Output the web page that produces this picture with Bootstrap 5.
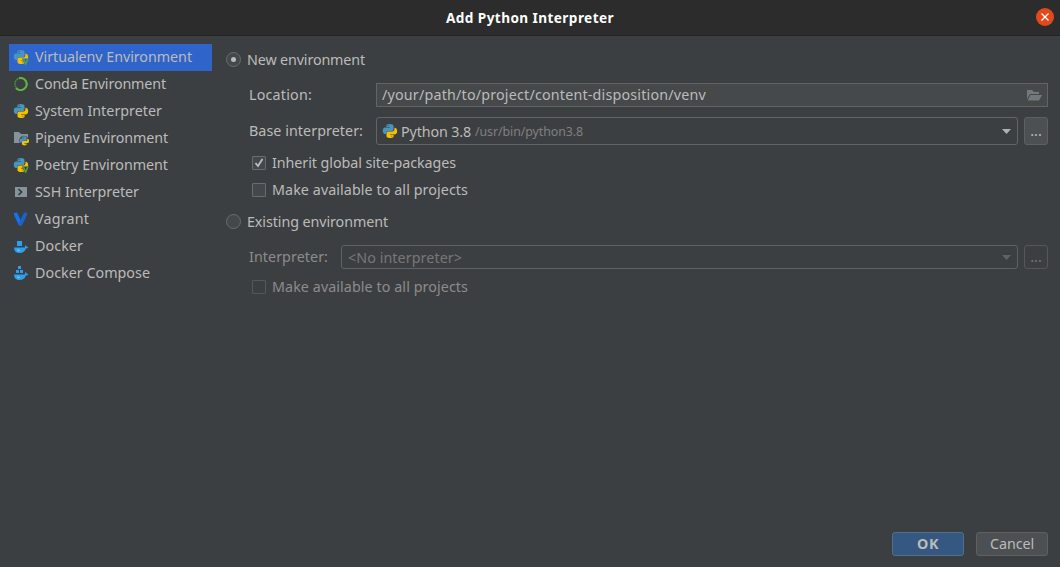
<!DOCTYPE html>
<html lang="en">
<head>
<meta charset="utf-8">
<title>Add Python Interpreter</title>
<link href="https://cdn.jsdelivr.net/npm/bootstrap@5.3.0/dist/css/bootstrap.min.css" rel="stylesheet">
<script src="https://cdn.jsdelivr.net/npm/bootstrap@5.3.0/dist/js/bootstrap.bundle.min.js"></script>
<style>
body{background:#3c3f41;color:#bbb;font:14.3px/20px "Noto Sans","Open Sans",sans-serif;height:567px;overflow:hidden}
svg{display:block;flex:none}
.titlebar{height:36px;background:#2c2c2c;border-bottom:1px solid #232323;color:#fff;font-weight:700;font-size:13.6px}
.close-btn{right:6px;top:8px;width:18px;height:18px}
.sidebar{width:212px;padding:8px 0 0 9px}
.envs{--bs-list-group-bg:transparent;--bs-list-group-color:#bbb;--bs-list-group-border-width:0;--bs-list-group-border-radius:0;--bs-list-group-active-bg:#2f65ca;--bs-list-group-active-color:#bbb}
.envs .list-group-item{height:27px;padding:0 0 1px 4px;gap:6px;margin:0}
.pane{padding:0 12px 0 14px}
.line{height:27px}
.sub{padding-left:23px}
.base-row{margin-top:10px}
.existing{margin-top:5px}
.interp-row{margin-top:10px}
.radio{width:15px;height:15px;border:1px solid #6b6b6b;border-radius:50%;background:#43494a;margin-right:6px}
.radio.on::after{content:"";width:5px;height:5px;border-radius:50%;background:#bbb}
.tick{width:14px;height:14px;border:1px solid #6b6b6b;border-radius:1px;background:#43494a;margin:0 6px 0 3px}
.field{height:24px;border:1px solid #646464;background:#45494a;padding:0 5px}
.combo{height:28px;border:1px solid #646464;border-radius:3px;padding:0 6px 0 5px}
.combo .fit{padding-top:1px}
.combo .me-1{margin-right:3px!important}
.low{height:24px;padding-left:6px}
.dots{width:24px;border:1px solid #5e6060;border-radius:3px;background:#4c5052;margin-left:6px;color:#bbb;padding:0}
.off{color:#8c8c8c}
.off .tick,.off .dots{background:#3c3f41;border-color:#575757}
.off .dots{color:#777}
.off .combo{color:#777;border-color:#606162}
.lbl{width:127px}
.lbl2{width:92px}
.path-hint{font-size:12.4px;color:#808080;margin-left:4px}
.act{width:72px;height:24px;border:1px solid #5e6060;border-radius:3px;background:#4c5052;color:#bbb;font-size:14.3px;line-height:20px;padding:0}
.act.main{background:#365880;border-color:#4c708c;font-weight:700}
footer{padding:0 12px 11px}
.fit{white-space:nowrap;display:inline-block}
</style>
</head>
<body class="d-flex flex-column">
<svg width="0" height="0" class="position-absolute"><defs>
<g id="py"><path fill="#4696c4" d="M5 1.5Q7.500.4 10.600 1.500 11.500 2 11.500 3v3.400Q11.500 8 10 8H6Q4.200 8 4.200 9.800V11H3Q.8 10.700.8 7.700.8 4.700 3 4.500h5V4H4.400V2.500Q4.400 1.800 5 1.500Z"/><path fill="#f2c100" d="M12.400 4.800H13q2.200.4 2.200 3.300 0 3-2.200 3.300H8v.6h3.600v1.500q0 .7-.7 1Q8.300 15.600 5.500 14.500 4.500 14 4.500 13V10q0-1.500 1.500-1.500h4.500q1.900 0 1.900-1.900Z"/><circle cx="6.200" cy="2.700" r=".6" fill="#2e566e"/><circle cx="9.800" cy="13.200" r=".6" fill="#8d7622"/></g>
<g id="whale" fill="#2c9ff0"><path d="M1 8.500h10.800Q11.800 7 12.600 6q1 .7 1.100 1.700 1-.1 1.700.3-.7 1.500-2.500 1.600Q11.600 14 6.700 14 1.200 14 1 8.500Z"/><circle cx="5.500" cy="11" r="1.200" fill="#9bd2f8"/><circle cx="5.800" cy="10.700" r=".6" fill="#2473aa"/></g>
</defs></svg>
<header class="titlebar position-relative d-flex align-items-center justify-content-center flex-shrink-0"><span class="fit" data-w="168">Add Python Interpreter</span>
<svg class="close-btn position-absolute" viewBox="0 0 18 18"><circle cx="9" cy="9" r="9" fill="#e3491b"/><path d="m5.500 5.500 7 7m0-7-7 7" stroke="#fff" stroke-width="1.300"/></svg></header>
<main class="d-flex flex-grow-1">
<nav class="sidebar flex-shrink-0"><div class="list-group envs">
<div class="list-group-item active d-flex align-items-center"><svg width="16" height="16"><use href="#py"/><path d="M9 9.500h7V16h-4z" fill="#2f65ca"/><path d="m10.300 9.500 2.300 5.700L15 9.500" fill="none" stroke="#56a43d" stroke-width="1.500"/></svg><span class="fit" data-w="157">Virtualenv Environment</span></div>
<div class="list-group-item d-flex align-items-center"><svg width="16" height="16"><circle cx="8" cy="8" r="6" fill="none" stroke="#438b36" stroke-width="1.500" stroke-dasharray="2 .5"/><path d="M6 2.300A6 6 0 1 1 3 12" fill="none" stroke="#62b543" stroke-width="2"/></svg><span class="fit" data-w="131">Conda Environment</span></div>
<div class="list-group-item d-flex align-items-center"><svg width="16" height="16"><use href="#py"/></svg><span class="fit" data-w="127">System Interpreter</span></div>
<div class="list-group-item d-flex align-items-center"><svg width="16" height="16"><path fill="#87939a" d="M1 2h5l2 2h7v9H1z"/><circle cx="11" cy="10.600" r="4.800" fill="#3c3f41"/><use href="#py" transform="translate(6 5.500) scale(.66)"/></svg><span class="fit" data-w="133">Pipenv Environment</span></div>
<div class="list-group-item d-flex align-items-center"><svg width="16" height="16"><use href="#py"/><path d="M9 9.500h7V16h-4z" fill="#3c3f41"/><path d="m10.300 9.500 2.300 5.700L15 9.500" fill="none" stroke="#56a43d" stroke-width="1.500"/></svg><span class="fit" data-w="133">Poetry Environment</span></div>
<div class="list-group-item d-flex align-items-center"><svg width="16" height="16"><path fill="#87939a" d="M2 3h12v10H2z"/><path d="m5.500 5 3 3-3 3" fill="none" stroke="#34383a" stroke-width="1.700"/></svg><span class="fit" data-w="104">SSH Interpreter</span></div>
<div class="list-group-item d-flex align-items-center"><svg width="16" height="16"><path d="m1 2 3-.5L8 10v4.500H6L1 4z" fill="#1672ee"/><path d="m11 1.500 3 .5v2L9 14.500H6.500V11z" fill="#1563d2"/></svg><span class="fit" data-w="54">Vagrant</span></div>
<div class="list-group-item d-flex align-items-center"><svg width="16" height="16"><use href="#whale" y="1"/><path fill="#2c9ff0" d="M4 3h5v5H4z"/></svg><span class="fit" data-w="48">Docker</span></div>
<div class="list-group-item d-flex align-items-center"><svg width="16" height="16"><use href="#whale" y="1"/><path fill="#2c9ff0" d="M5 1h3v3H5zM3 5h3v3H3zM7 5h3v3H7z"/></svg><span class="fit" data-w="115">Docker Compose</span></div>
</div></nav>
<section class="pane flex-grow-1">
<div class="line d-flex align-items-center mt-2 pt-1"><span class="radio on d-flex align-items-center justify-content-center"></span><span class="fit" data-w="118">New environment</span></div>
<div class="sub">
<div class="d-flex align-items-center mt-2 pt-1"><div class="lbl"><span class="fit" data-w="63">Location:</span></div><div class="field flex-grow-1 d-flex align-items-center justify-content-between"><span class="fit" data-w="324">/your/path/to/project/content-disposition/venv</span><svg width="16" height="16"><path fill="#71797d" d="M1 3h5l2 2h5v2H4L1 12zM4.500 8H16l-3 5.500H1.500z"/></svg></div></div>
<div class="d-flex base-row"><div class="lbl d-flex align-items-center"><span class="fit" data-w="114">Base interpreter:</span></div><div class="combo flex-grow-1 d-flex align-items-center"><svg width="16" height="16" class="me-1"><use href="#py"/></svg><span class="fit" data-w="70">Python 3.8</span><span class="path-hint fit" data-w="108">/usr/bin/python3.8</span><svg class="ms-auto" width="9" height="5"><path fill="#afb1b3" d="M0 0h9L4.500 5z"/></svg></div><button class="dots">...</button></div>
<div class="line d-flex align-items-center mt-1"><span class="tick"><svg width="12" height="12"><path d="m2.500 6 2.500 3 4.500-7" fill="none" stroke="#bbb" stroke-width="1.900"/></svg></span><span class="fit" data-w="184">Inherit global site-packages</span></div>
<div class="line d-flex align-items-center"><span class="tick"></span><span class="fit" data-w="196">Make available to all projects</span></div>
</div>
<div class="line existing d-flex align-items-center"><span class="radio"></span><span class="fit" data-w="141">Existing environment</span></div>
<div class="sub off">
<div class="d-flex interp-row"><div class="lbl2 d-flex align-items-center"><span class="fit" data-w="79">Interpreter:</span></div><div class="combo low flex-grow-1 d-flex align-items-center"><span class="fit" data-w="114">&lt;No interpreter&gt;</span><svg class="ms-auto" width="9" height="5"><path fill="#606162" d="M0 0h9L4.500 5z"/></svg></div><button class="dots">...</button></div>
<div class="line d-flex align-items-center mt-1"><span class="tick"></span><span class="fit" data-w="196">Make available to all projects</span></div>
</div>
</section>
</main>
<footer class="d-flex justify-content-end gap-2"><button class="act main me-1"><span class="fit" data-w="22">OK</span></button><button class="act"><span class="fit" data-w="44">Cancel</span></button></footer>
<script>
// Keep label advance widths consistent across font fallbacks.
document.querySelectorAll('.fit').forEach(function(el){
  var gap=(Number(el.dataset.w)-el.getBoundingClientRect().width)/el.textContent.length;
  el.style.letterSpacing=gap+'px';
});
</script>
</body>
</html>
